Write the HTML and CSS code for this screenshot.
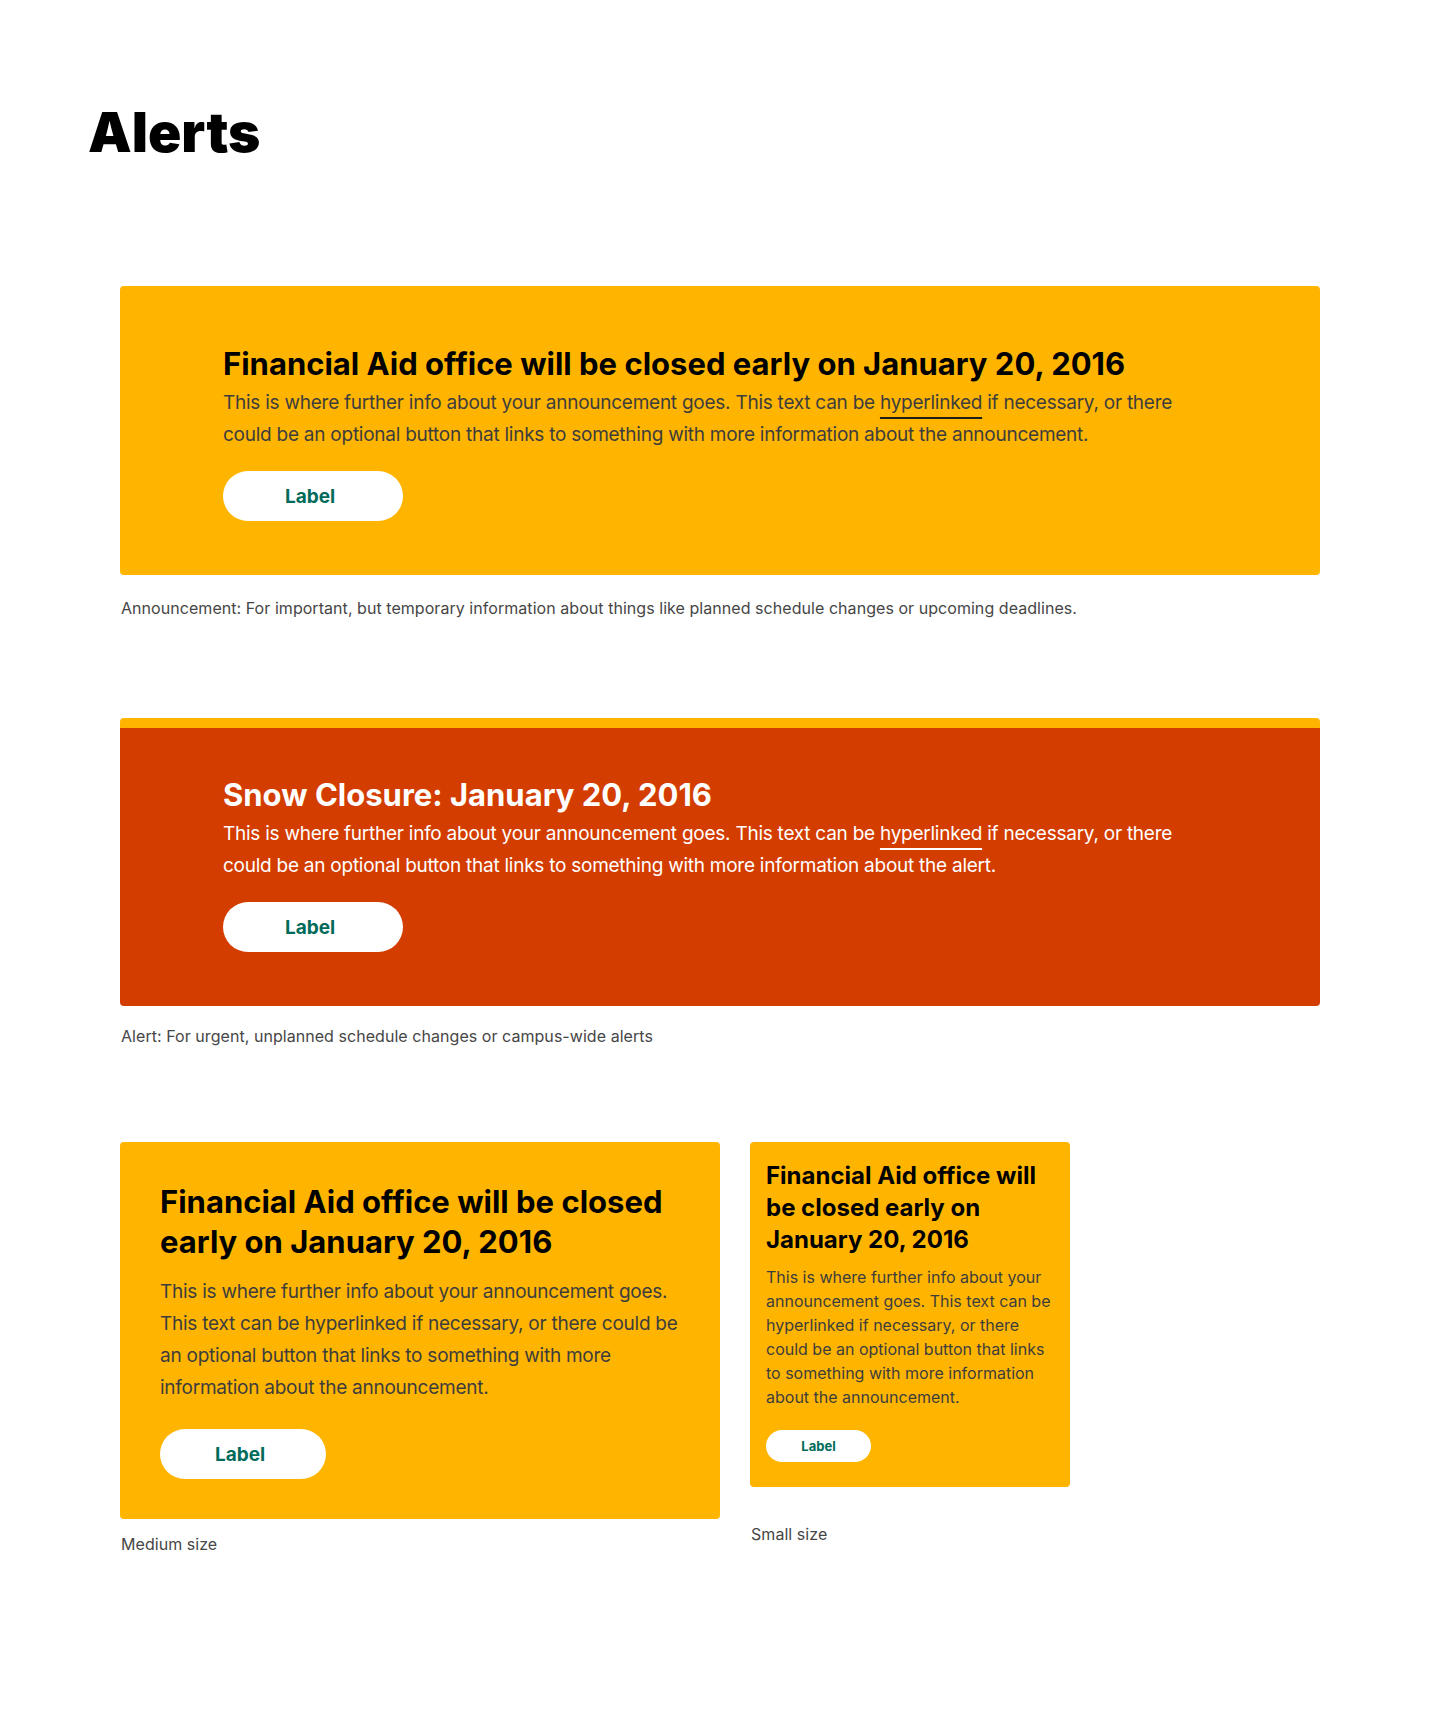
FILE: index.html
```html
<!DOCTYPE html>
<html lang="en">
<head>
<meta charset="utf-8">
<title>Alerts</title>
<link rel="stylesheet" href="styles.css">
</head>
<body>
<main class="page">
  <h1 class="title">Alerts</h1>

  <section class="section section-first">
    <div class="alert alert-large">
      <h2 class="alert-heading">Financial Aid office will be closed early on January 20, 2016</h2>
      <p class="alert-text">This is where further info about your announcement goes. This text can be <a class="link" href="#">hyperlinked</a> if necessary, or there could be an optional button that links to something with more information about the announcement.</p>
      <a class="btn" href="#">Label</a>
    </div>
    <p class="caption caption-1">Announcement: For important, but temporary information about things like planned schedule changes or upcoming deadlines.</p>
  </section>

  <section class="section section-second">
    <div class="alert alert-large alert-urgent">
      <h2 class="alert-heading">Snow Closure: January 20, 2016</h2>
      <p class="alert-text">This is where further info about your announcement goes. This text can be <a class="link" href="#">hyperlinked</a> if necessary, or there could be an optional button that links to something with more information about the alert.</p>
      <a class="btn" href="#">Label</a>
    </div>
    <p class="caption caption-2">Alert: For urgent, unplanned schedule changes or campus-wide alerts</p>
  </section>

  <section class="section sizes">
    <div class="size-col size-medium">
      <div class="alert alert-medium">
        <h2 class="alert-heading">Financial Aid office will be closed early on January 20, 2016</h2>
        <p class="alert-text">This is where further info about your announcement goes. This text can be hyperlinked if necessary, or there could be an optional button that links to something with more information about the announcement.</p>
        <a class="btn" href="#">Label</a>
      </div>
      <p class="caption caption-medium">Medium size</p>
    </div>
    <div class="size-col size-small">
      <div class="alert alert-small">
        <h2 class="alert-heading">Financial Aid office will be closed early on January 20, 2016</h2>
        <p class="alert-text">This is where further info about your announcement goes. This text can be hyperlinked if necessary, or there could be an optional button that links to something with more information about the announcement.</p>
        <a class="btn" href="#">Label</a>
      </div>
      <p class="caption caption-small">Small size</p>
    </div>
  </section>
</main>
</body>
</html>
```

FILE: styles.css
```css
* { box-sizing: border-box; }

html, body {
  margin: 0;
  padding: 0;
  background: #ffffff;
}

body {
  font-family: Inter, "Noto Sans", "Liberation Sans", sans-serif;
  color: #000;
}

.page {
  padding: 100px 0 120px 88px;
}

.title {
  margin: 0;
  font-size: 55px;
  line-height: 65px;
  font-weight: 900;
}

.section {
  width: 1200px;
  margin-left: 32px;
  margin-top: 100px;
}

.section-first {
  margin-top: 121px;
}

.section-second {
  margin-top: 98px;
}

.sizes {
  margin-top: 94px;
}

.alert {
  background: #ffb500;
  border-radius: 4px;
}

.alert-large {
  padding: 58px 103px 54px;
}

.alert-urgent {
  background: #d43d00;
  border-top: 10px solid #ffb500;
  padding-top: 47px;
  color: #fff;
}

.alert-heading {
  margin: 0;
  font-weight: 700;
  color: inherit;
}

.alert-text {
  margin: 0;
  color: #3d3d3d;
}

.alert-urgent .alert-text {
  color: #fff;
}

.alert-large .alert-heading {
  font-size: 31px;
  line-height: 40px;
}

.alert-large .alert-text {
  margin-top: 3px;
  font-size: 19px;
  line-height: 32px;
  letter-spacing: -0.25px;
  max-width: 960px;
}

.link {
  color: inherit;
  text-decoration: underline;
  text-decoration-thickness: 2px;
  text-underline-offset: 8px;
  text-decoration-color: #1e1e1e;
}

.alert-urgent .link {
  text-decoration-color: #fff;
}

.btn {
  display: flex;
  align-items: center;
  justify-content: center;
  background: #fff;
  color: #006b5a;
  font-weight: 700;
  text-decoration: none;
}

.alert-large .btn {
  margin-top: 20px;
  width: 180px;
  height: 50px;
  border-radius: 25px;
  font-size: 19px;
  padding-right: 6px;
}

.caption {
  margin: 0 0 0 1px;
  font-size: 16px;
  line-height: 24px;
  letter-spacing: 0.05px;
  color: #464646;
}

.caption-1 { margin-top: 21px; }
.caption-2 { margin-top: 18px; }
.caption-medium { margin-top: 13px; }
.caption-small { margin-top: 35px; }

.sizes {
  display: flex;
  align-items: flex-start;
  gap: 30px;
}

.size-medium { width: 600px; }
.size-small { width: 320px; }

.alert-medium {
  padding: 40px 30px 40px 40px;
}

.alert-medium .alert-heading {
  font-size: 31px;
  line-height: 40px;
  max-width: 520px;
}

.alert-medium .alert-text {
  margin-top: 14px;
  font-size: 19px;
  line-height: 32px;
  letter-spacing: -0.25px;
}

.alert-medium .btn {
  margin-top: 25px;
  width: 166px;
  height: 50px;
  border-radius: 25px;
  font-size: 19px;
  padding-right: 6px;
}

.alert-small {
  padding: 18px 12px 25px 16px;
}

.alert-small .alert-heading {
  font-size: 24px;
  line-height: 32px;
  max-width: 288px;
}

.alert-small .alert-text {
  margin-top: 9px;
  font-size: 16px;
  line-height: 24px;
}

.alert-small .btn {
  margin-top: 21px;
  width: 105px;
  height: 32px;
  border-radius: 16px;
  font-size: 13px;
}
```
